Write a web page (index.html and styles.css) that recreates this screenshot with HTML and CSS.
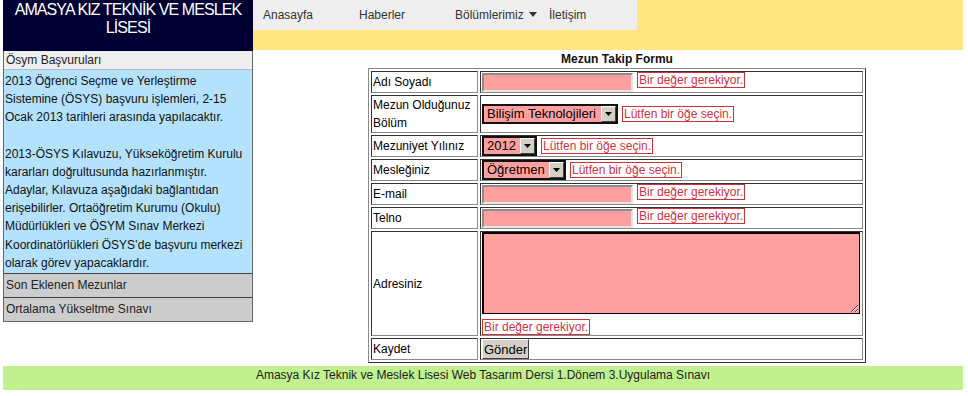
FILE: index.html
```html
<!DOCTYPE html>
<html lang="tr">
<head>
    <meta charset="UTF-8">
    <title>Mezun Takip Formu</title>
    <link rel="stylesheet" href="styles.css">
</head>
<body>
    <div class="page">
        <div class="main">

            <!-- Sol menü -->
            <aside class="sidebar">
                <h1 class="brand">AMASYA KIZ TEKNİK VE MESLEK LİSESİ</h1>
                <div class="acc">
                    <h3 class="acc-head active">Ösym Başvuruları</h3>
                    <div class="acc-body">
                        <p>2013 Öğrenci Seçme ve Yerleştirme Sistemine (ÖSYS) başvuru işlemleri, 2-15 Ocak 2013 tarihleri arasında yapılacaktır.</p>
                        <p>2013-ÖSYS Kılavuzu, Yükseköğretim Kurulu kararları doğrultusunda hazırlanmıştır. Adaylar, Kılavuza aşağıdaki bağlantıdan erişebilirler. Ortaöğretim Kurumu (Okulu) Müdürlükleri ve ÖSYM Sınav Merkezi Koordinatörlükleri ÖSYS’de başvuru merkezi olarak görev yapacaklardır.</p>
                    </div>
                    <h3 class="acc-head">Son Eklenen Mezunlar</h3>
                    <h3 class="acc-head">Ortalama Yükseltme Sınavı</h3>
                </div>
            </aside>

            <div class="content">
                <header class="band">
                    <nav class="menu">
                        <a href="#">Anasayfa</a>
                        <a href="#">Haberler</a>
                        <a href="#" class="drop">Bölümlerimiz
                            <svg width="8" height="5" viewBox="0 0 8 5"><path d="M0 0h8L4 5z" fill="#333"/></svg>
                        </a>
                        <a href="#">İletişim</a>
                    </nav>
                </header>

                <div class="form-wrap">
                    <div class="form-title">Mezun Takip Formu</div>
                    <table class="form">
                        <tr>
                            <td class="label">Adı Soyadı</td>
                            <td><div class="field top"><input type="text" class="txt"><span class="err">Bir değer gerekiyor.</span></div></td>
                        </tr>
                        <tr>
                            <td class="label tall">Mezun Olduğunuz Bölüm</td>
                            <td>
                                <div class="field">
                                    <span class="sel"><select><option>Bilişim Teknolojileri</option></select><span class="sel-btn"><svg width="7" height="4" viewBox="0 0 7 4"><path d="M0 0h7L3.5 4z" fill="#000"/></svg></span></span>
                                    <span class="err">Lütfen bir öğe seçin.</span>
                                </div>
                            </td>
                        </tr>
                        <tr>
                            <td class="label">Mezuniyet Yılınız</td>
                            <td>
                                <div class="field">
                                    <span class="sel"><select><option>2012</option></select><span class="sel-btn"><svg width="7" height="4" viewBox="0 0 7 4"><path d="M0 0h7L3.5 4z" fill="#000"/></svg></span></span>
                                    <span class="err">Lütfen bir öğe seçin.</span>
                                </div>
                            </td>
                        </tr>
                        <tr>
                            <td class="label">Mesleğiniz</td>
                            <td>
                                <div class="field">
                                    <span class="sel"><select><option>Öğretmen</option></select><span class="sel-btn"><svg width="7" height="4" viewBox="0 0 7 4"><path d="M0 0h7L3.5 4z" fill="#000"/></svg></span></span>
                                    <span class="err">Lütfen bir öğe seçin.</span>
                                </div>
                            </td>
                        </tr>
                        <tr>
                            <td class="label">E-mail</td>
                            <td><div class="field top"><input type="text" class="txt"><span class="err">Bir değer gerekiyor.</span></div></td>
                        </tr>
                        <tr>
                            <td class="label">Telno</td>
                            <td><div class="field top"><input type="text" class="txt"><span class="err">Bir değer gerekiyor.</span></div></td>
                        </tr>
                        <tr>
                            <td class="label">Adresiniz</td>
                            <td class="area-cell">
                                <div class="field col">
                                    <textarea class="area"></textarea>
                                    <span class="err">Bir değer gerekiyor.</span>
                                </div>
                            </td>
                        </tr>
                        <tr>
                            <td class="label">Kaydet</td>
                            <td><button class="btn">Gönder</button></td>
                        </tr>
                    </table>
                </div>
            </div>
        </div>

        <footer class="footer">Amasya Kız Teknik ve Meslek Lisesi Web Tasarım Dersi 1.Dönem 3.Uygulama Sınavı</footer>
    </div>
</body>
</html>
```

FILE: styles.css
```css
body {
    margin: 0;
    padding: 0;
    font-family: "Liberation Sans", Arial, sans-serif;
    font-size: 12px;
    color: #000;
    background: #fff;
}

*,
*::before,
*::after {
    box-sizing: border-box;
}

.page {
    width: 960px;
    margin-left: 3px;
}

.main {
    display: flex;
    align-items: flex-start;
}

/* Sol menü */
.sidebar {
    width: 250px;
    flex-shrink: 0;
}

.brand {
    margin: 0;
    height: 51px;
    padding-top: 1px;
    background-color: #000033;
    color: #fff;
    font-size: 16px;
    font-weight: normal;
    letter-spacing: -0.9px;
    line-height: 18px;
    text-align: center;
}

.acc {
    border-left: 1px solid #666;
    border-right: 1px solid #666;
    border-bottom: 1px solid #666;
}

.acc-head {
    margin: 0;
    height: 24px;
    line-height: 23px;
    padding-left: 2px;
    font-size: 12px;
    font-weight: normal;
    color: #222;
    background-color: #cccccc;
    border-top: 1px solid #444;
}

.acc-head.active {
    height: 19px;
    line-height: 18px;
    background-color: #eeeeee;
    border-top: none;
    border-bottom: 1px solid #bbb;
}

.acc-body {
    background-color: #b4e1fc;
    padding: 2px 1px 1px 1px;
    line-height: 18.2px;
    color: #111;
}

.acc-body p {
    margin: 0;
}

.acc-body p + p {
    margin-top: 18px;
}

/* Sağ taraf */
.content {
    width: 710px;
}

.band {
    height: 50px;
    background-color: #ffe580;
}

.menu {
    width: 384px;
    height: 30px;
    background-color: #eeeeee;
    display: flex;
    align-items: center;
    padding-left: 10px;
}

.menu a {
    color: #333;
    text-decoration: none;
    flex: 0 0 96px;
}

.menu a.drop {
    flex-basis: 94px;
}

.menu a svg {
    margin-left: 2px;
    vertical-align: 2px;
}

.form-wrap {
    width: 498px;
    margin-left: 115px;
}

.form-title {
    text-align: center;
    font-weight: bold;
    line-height: 18px;
    color: #111;
}

.form {
    width: 498px;
    border-collapse: separate;
    border-spacing: 2px;
    border-style: solid;
    border-width: 1px;
    border-color: #8a8a8a #333 #333 #8a8a8a;
}

.form td {
    border-style: solid;
    border-width: 1px;
    border-color: #333 #8a8a8a #8a8a8a #333;
    padding: 0 1px;
    height: 20px;
    vertical-align: middle;
}

.form td.label {
    width: 107px;
    line-height: 18px;
}

.field {
    display: flex;
    align-items: center;
    gap: 4px;
}

.field.top {
    align-items: flex-start;
}

.field.col {
    flex-direction: column;
    align-items: flex-start;
    gap: 5px;
}

.txt {
    width: 151px;
    height: 19px;
    margin: 1px 0 0 0;
    background-color: #ffa0a0;
    border-style: solid;
    border-width: 2px;
    border-color: #8c8c8c #e4e4e4 #e4e4e4 #8c8c8c;
    padding: 0 2px;
}

.err {
    display: inline-block;
    border: 1px solid #cc3333;
    color: #cc3344;
    font-size: 12px;
    line-height: 14px;
    padding: 0 1px;
}

.sel {
    display: inline-flex;
    height: 20px;
    border: 2px solid #111;
    background-color: #ffa0a0;
}

.sel select {
    appearance: none;
    -webkit-appearance: none;
    border: none;
    background: transparent;
    font-family: "Liberation Sans", Arial, sans-serif;
    font-size: 13px;
    color: #000;
    padding: 0 4px 0 3px;
    height: 16px;
    line-height: 16px;
    outline: none;
}

.sel-btn {
    width: 15px;
    height: 16px;
    background-color: #d4d0c8;
    border-style: solid;
    border-width: 1px;
    border-color: #fff #404040 #404040 #fff;
    display: flex;
    align-items: center;
    justify-content: center;
}

.area-cell {
    padding-top: 1px;
}

.area {
    display: block;
    width: 378px;
    height: 82px;
    margin: 0;
    background-color: #ffa0a0;
    border-style: solid;
    border-width: 2px 1px 1px 2px;
    border-color: #000;
}

.btn {
    display: block;
    height: 20px;
    padding: 0 1px;
    font-family: "Liberation Sans", Arial, sans-serif;
    font-size: 13px;
    color: #000;
    background-color: #d4d0c8;
    border-style: solid;
    border-width: 1px;
    border-color: #fff #404040 #404040 #fff;
}

.footer {
    margin-top: 3px;
    height: 24px;
    padding-top: 2px;
    line-height: 15px;
    text-align: center;
    background-color: #c1f08f;
    color: #222;
}
```
